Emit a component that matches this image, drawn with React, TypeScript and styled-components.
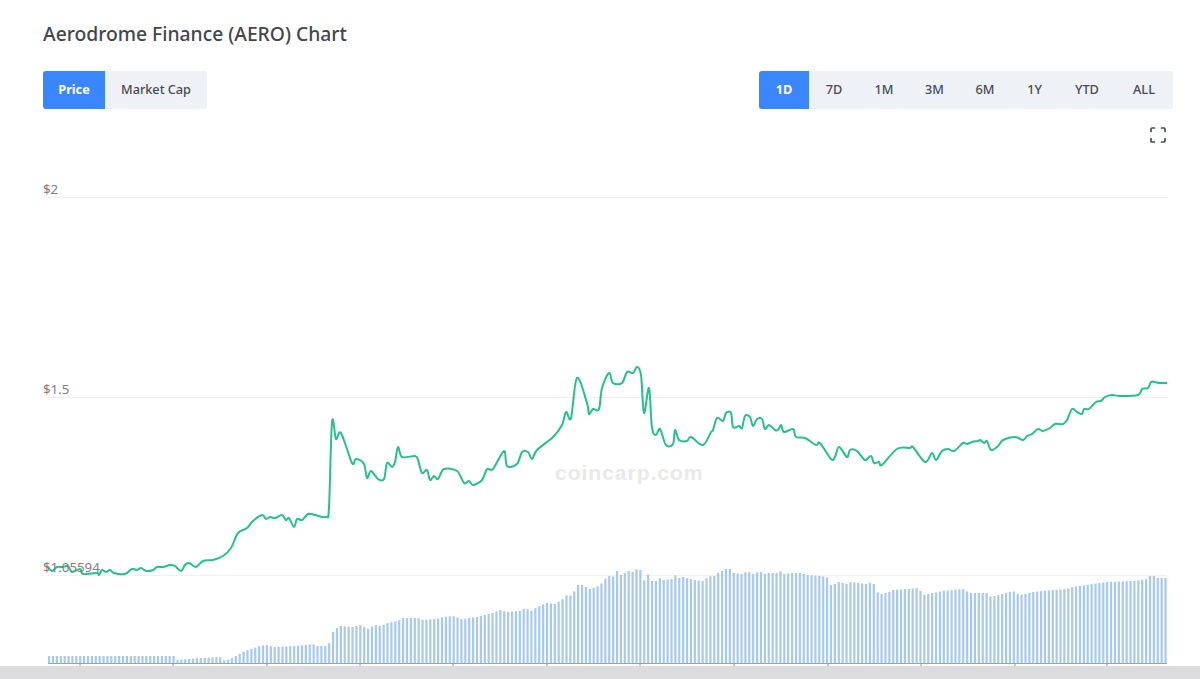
import React, {useState} from 'react';
import styled, {createGlobalStyle} from 'styled-components';

const GlobalStyle = createGlobalStyle`
  html, body {
    margin: 0;
    padding: 0;
    background: #fff;
  }
`

const Page = styled.div`
  width: 1200px;
  height: 679px;
  overflow: hidden;
  display: flex;
  flex-direction: column;
  font-family: "Noto Sans", "Open Sans", sans-serif;
`

const Content = styled.main`
  flex: 1;
  padding: 0 27px 0 43px;
`

const Title = styled.h2`
  margin: 0;
  padding-top: 20px;
  height: 71px;
  box-sizing: border-box;
  font-size: 19.3px;
  line-height: 27px;
  font-weight: 500;
  color: #404650;
`

const Toolbar = styled.div`
  display: flex;
  justify-content: space-between;
`

const Group = styled.div`
  display: flex;
  height: 38px;
  background: #eef1f5;
  border-radius: 3px;
  overflow: hidden;
`

const TabButton = styled.button<{ $active?: boolean; $width: number }>`
  width: ${p => p.$width}px;
  padding: 0 0 2px;
  border: 0;
  font-family: inherit;
  font-size: 12.7px;
  font-weight: ${p => p.$active ? 700 : 500};
  color: ${p => p.$active ? '#fff' : '#454b57'};
  background: ${p => p.$active ? '#3a86ff' : 'transparent'};
  cursor: pointer;
`

const IconRow = styled.div`
  display: flex;
  justify-content: flex-end;
  height: 41px;
  padding: 18px 7px 0 0;
  box-sizing: border-box;
`

const Chart = styled.svg`
  display: block;
  width: 1130px;
  height: 516px;
`

const ChartLabel = styled.text`
  font-size: 13.3px;
  fill: #808080;
`

const Watermark = styled.text`
  font-family: "Liberation Sans", Arial, sans-serif;
  font-size: 21px;
  font-weight: 700;
  letter-spacing: 1px;
  fill: #e9e9e9;
`

const BottomBand = styled.footer`
  height: 13px;
  background: #dcdcde;
`

const priceTabs = [
    {label: 'Price', width: 62},
    {label: 'Market Cap', width: 102},
]

const rangeTabs = [
    {label: '1D', width: 50},
    {label: '7D', width: 50},
    {label: '1M', width: 50},
    {label: '3M', width: 51},
    {label: '6M', width: 50},
    {label: '1Y', width: 49},
    {label: 'YTD', width: 56},
    {label: 'ALL', width: 58},
]

// traced price line, in page pixels
const pricePoints: number[][] = [
    [47, 566], [52, 571], [57, 567], [63, 567], [68, 566], [72, 572], [80, 569], [83, 574], [97, 573], [99, 575],
    [102, 570], [106, 572], [110, 570], [114, 573], [125, 574], [132, 569], [137, 570], [141, 568], [146, 571],
    [153, 570], [157, 567], [163, 567], [170, 565], [175, 566], [181, 571], [185, 565], [189, 563], [196, 567],
    [203, 561], [213, 560], [223, 556], [231, 548], [238, 533], [247, 528], [253, 521], [262, 515], [266, 519],
    [270, 517], [275, 518], [282, 515], [286, 520], [289, 518], [294, 527], [297, 519], [302, 520], [308, 514],
    [315, 515], [326, 517], [329, 507], [332, 422], [336, 439], [341, 433], [352, 463], [356, 459], [364, 464],
    [367, 478], [371, 471], [378, 479], [384, 479], [387, 463], [392, 467], [395, 462], [398, 447], [402, 457],
    [415, 456], [418, 460], [422, 473], [427, 470], [430, 480], [434, 476], [438, 479], [444, 469], [457, 471],
    [464, 483], [469, 481], [473, 485], [482, 480], [487, 469], [493, 469], [504, 451], [507, 466], [517, 464],
    [522, 452], [528, 452], [532, 459], [537, 450], [553, 437], [562, 425], [566, 412], [571, 418], [577, 378],
    [587, 403], [589, 414], [593, 409], [599, 409], [602, 388], [609, 373], [613, 383], [622, 383], [627, 372],
    [633, 373], [637, 367], [641, 375], [644, 413], [649, 388], [652, 428], [656, 435], [660, 429], [666, 445],
    [673, 444], [675, 430], [679, 440], [687, 441], [691, 437], [703, 445], [711, 432], [713, 430], [717, 418],
    [723, 421], [726, 413], [731, 413], [733, 427], [739, 426], [742, 428], [745, 416], [750, 417], [753, 426],
    [757, 419], [762, 419], [765, 429], [769, 425], [775, 430], [778, 430], [781, 425], [784, 432], [793, 429],
    [796, 437], [805, 438], [816, 445], [820, 443], [831, 459], [835, 457], [839, 447], [847, 457], [850, 450],
    [857, 451], [865, 460], [871, 456], [874, 463], [879, 462], [882, 465], [897, 449], [910, 448], [913, 447],
    [925, 462], [932, 453], [936, 460], [942, 451], [948, 449], [954, 451], [963, 443], [967, 444], [972, 442],
    [978, 441], [980, 440], [984, 443], [987, 441], [991, 450], [998, 446], [1003, 440], [1015, 437], [1023, 440],
    [1027, 436], [1032, 434], [1038, 429], [1043, 431], [1050, 428], [1055, 424], [1063, 424], [1067, 420],
    [1072, 409], [1077, 412], [1082, 414], [1084, 409], [1089, 409], [1096, 402], [1101, 401], [1105, 397],
    [1112, 395], [1120, 396], [1138, 395], [1142, 389], [1148, 388], [1151, 382], [1155, 382], [1160, 383], [1167, 383],
]

// tops of the volume bars, x and y in page pixels
const volumeTops: number[][] = [
    [48, 656], [174, 656], [177, 660], [200, 658], [220, 657], [225, 661], [232, 658], [245, 651], [260, 646], [266, 645],
    [275, 647], [297, 646], [313, 644], [317, 646], [325, 646], [329, 644], [333, 632], [337, 628], [341, 626],
    [353, 627], [360, 625], [368, 629], [375, 625], [382, 626], [387, 623], [398, 621], [403, 618], [418, 618],
    [423, 620], [437, 619], [443, 617], [453, 616], [462, 619], [477, 617], [485, 615], [493, 613], [500, 610],
    [507, 612], [520, 611], [525, 608], [532, 611], [537, 607], [547, 603], [555, 604], [563, 599], [567, 595],
    [570, 596], [574, 592], [578, 585], [583, 585], [589, 589], [597, 587], [602, 583], [605, 579], [609, 576],
    [613, 577], [617, 571], [621, 575], [625, 573], [629, 571], [633, 572], [637, 569], [641, 570], [644, 581],
    [648, 574], [652, 581], [656, 581], [660, 578], [664, 580], [672, 579], [675, 575], [679, 578], [683, 577],
    [690, 579], [695, 580], [703, 581], [707, 578], [711, 576], [715, 576], [718, 573], [722, 571], [726, 569],
    [730, 569], [734, 573], [742, 574], [746, 572], [749, 572], [753, 574], [758, 572], [761, 572], [765, 574],
    [769, 573], [777, 573], [781, 571], [784, 574], [792, 573], [800, 573], [808, 575], [820, 576], [827, 577],
    [831, 585], [835, 584], [839, 582], [847, 584], [851, 582], [858, 583], [866, 584], [870, 583], [874, 584],
    [878, 593], [882, 594], [889, 592], [893, 590], [908, 589], [917, 588], [920, 590], [923, 595], [933, 593], [943, 591],
    [963, 589], [970, 593], [987, 593], [991, 597], [1013, 591], [1020, 595], [1033, 592], [1053, 590], [1067, 589],
    [1073, 587], [1107, 582], [1133, 581], [1147, 579], [1150, 576], [1155, 576], [1158, 578], [1167, 578],
]

const ticks = [80, 173, 267, 360, 453, 547, 640, 734, 828, 921, 1015, 1107]
const gridLines = [197, 397, 575]

const BAR_STEP = 3.89
const AXIS_Y = 663.5

function smoothPath(points: number[][]) {
    let d = `M${points[0][0]} ${points[0][1]}`
    for (let i = 0; i < points.length - 1; i++) {
        const p0 = points[i - 1] || points[i]
        const p1 = points[i]
        const p2 = points[i + 1]
        const p3 = points[i + 2] || p2
        const c1x = p1[0] + (p2[0] - p0[0]) / 6
        const c1y = p1[1] + (p2[1] - p0[1]) / 6
        const c2x = p2[0] - (p3[0] - p1[0]) / 6
        const c2y = p2[1] - (p3[1] - p1[1]) / 6
        d += `C${c1x.toFixed(1)} ${c1y.toFixed(1)} ${c2x.toFixed(1)} ${c2y.toFixed(1)} ${p2[0]} ${p2[1]}`
    }
    return d
}

function topAt(x: number) {
    const next = volumeTops.findIndex(p => p[0] >= x)
    if (next <= 0) return volumeTops[next === 0 ? 0 : volumeTops.length - 1][1]
    const a = volumeTops[next - 1]
    const b = volumeTops[next]
    return a[1] + (b[1] - a[1]) * (x - a[0]) / (b[0] - a[0])
}

const bars = Array.from({length: 288}, (_, i) => {
    const x = 48 + i * BAR_STEP
    return {x, top: topAt(x + 1.2)}
})

const FullscreenIcon = () => (
    <svg width="16" height="16" viewBox="0 0 16 16" fill="none" stroke="#464c59" strokeWidth="1.7" strokeLinecap="round" strokeLinejoin="round">
        <path d="M1 4.5V2a1 1 0 0 1 1-1h2.5"/>
        <path d="M11.5 1H14a1 1 0 0 1 1 1v2.5"/>
        <path d="M15 11.5V14a1 1 0 0 1-1 1h-2.5"/>
        <path d="M4.5 15H2a1 1 0 0 1-1-1v-2.5"/>
    </svg>
)

const App = () => {
    const [mode, setMode] = useState('Price')
    const [range, setRange] = useState('1D')

    return (
        <Page>
            <GlobalStyle/>
            <Content>
                <Title>Aerodrome Finance (AERO) Chart</Title>
                <Toolbar>
                    <Group>
                        {priceTabs.map(t => (
                            <TabButton key={t.label} $width={t.width} $active={mode === t.label} onClick={() => setMode(t.label)}>
                                {t.label}
                            </TabButton>
                        ))}
                    </Group>
                    <Group>
                        {rangeTabs.map(t => (
                            <TabButton key={t.label} $width={t.width} $active={range === t.label} onClick={() => setRange(t.label)}>
                                {t.label}
                            </TabButton>
                        ))}
                    </Group>
                </Toolbar>
                <IconRow>
                    <FullscreenIcon/>
                </IconRow>
                <Chart viewBox="43 150 1130 516">
                    {gridLines.map(y => (
                        <line key={y} x1="48" x2="1167" y1={y + 0.5} y2={y + 0.5} stroke="#f0f0f0"/>
                    ))}
                    <ChartLabel x="43" y="194">$2</ChartLabel>
                    <ChartLabel x="43" y="394">$1.5</ChartLabel>
                    <Watermark x="555" y="480">coincarp.com</Watermark>
                    {bars.map(b => (
                        <rect key={b.x} x={b.x} y={b.top} width="2.2" height={AXIS_Y - b.top} fill="#a6c8f2"/>
                    ))}
                    <line x1="48" x2="1167" y1={AXIS_Y} y2={AXIS_Y} stroke="#8fa3c4"/>
                    {ticks.map(x => (
                        <line key={x} x1={x} x2={x} y1={AXIS_Y} y2="666" stroke="#8a94a6"/>
                    ))}
                    <path d={smoothPath(pricePoints)} fill="none" stroke="#24c18c" strokeWidth="2" strokeLinejoin="round"/>
                    <ChartLabel x="43" y="572">$1.05594</ChartLabel>
                </Chart>
            </Content>
            <BottomBand/>
        </Page>
    );
};

export default App;
